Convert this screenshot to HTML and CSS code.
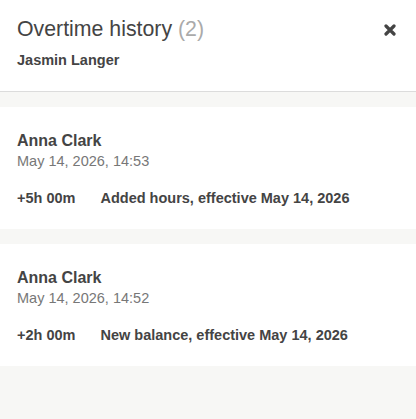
FILE: index.html
```html
<!DOCTYPE html>
<html lang="en">
<head>
<meta charset="utf-8">
<title>Overtime history</title>
<link rel="stylesheet" href="styles.css">
</head>
<body>
<div class="panel">
  <header class="panel-header">
    <div class="heading">
      <h1 class="title">Overtime history <span class="count">(2)</span></h1>
      <div class="subtitle">Jasmin Langer</div>
    </div>
    <button class="close" type="button" aria-label="Close">
      <svg width="12" height="12" viewBox="0 0 12 12" aria-hidden="true">
        <path d="M2 2 L10 10 M10 2 L2 10" stroke="#444" stroke-width="3.2" stroke-linecap="round"/>
      </svg>
    </button>
  </header>
  <main class="entries">
    <section class="entry">
      <div class="author">Anna Clark</div>
      <div class="stamp">May 14, 2026, 14:53</div>
      <div class="change">
        <span class="amount">+5h 00m</span>
        <span class="note">Added hours, effective May 14, 2026</span>
      </div>
    </section>
    <section class="entry">
      <div class="author">Anna Clark</div>
      <div class="stamp">May 14, 2026, 14:52</div>
      <div class="change">
        <span class="amount">+2h 00m</span>
        <span class="note">New balance, effective May 14, 2026</span>
      </div>
    </section>
  </main>
</div>
</body>
</html>
```
FILE: styles.css
```css
html, body {
  margin: 0;
  padding: 0;
  height: 100%;
}
body {
  font-family: "Liberation Sans", Arial, sans-serif;
  color: #444;
  background: #f7f7f5;
}
.panel {
  min-height: 100%;
  display: flex;
  flex-direction: column;
}
.panel-header {
  background: #fff;
  border-bottom: 1px solid #dcdcdc;
  display: flex;
  justify-content: space-between;
  align-items: flex-start;
  padding: 17px 20px 0 17px;
  height: 74px;
}
.title {
  margin: 0;
  font-size: 21.3px;
  font-weight: normal;
  line-height: 24px;
  color: #444;
}
.count {
  color: #aaa;
}
.subtitle {
  margin-top: 10px;
  font-size: 14.5px;
  font-weight: bold;
  line-height: 18px;
}
.close {
  background: none;
  border: 0;
  padding: 0;
  margin: 7px 0 0 0;
  cursor: pointer;
  display: block;
}
.close svg {
  display: block;
}
.entries {
  padding-top: 15px;
  display: flex;
  flex-direction: column;
  gap: 15px;
}
.entry {
  box-sizing: border-box;
  background: #fff;
  padding: 24px 17px 0 17px;
  height: 122px;
}
.author {
  font-size: 16px;
  font-weight: bold;
  line-height: 20px;
}
.stamp {
  font-size: 14.5px;
  color: #777;
  line-height: 18px;
  margin-top: 1px;
}
.change {
  margin-top: 19px;
  display: flex;
  gap: 25px;
  font-size: 14.5px;
  font-weight: bold;
  line-height: 18px;
}
```
